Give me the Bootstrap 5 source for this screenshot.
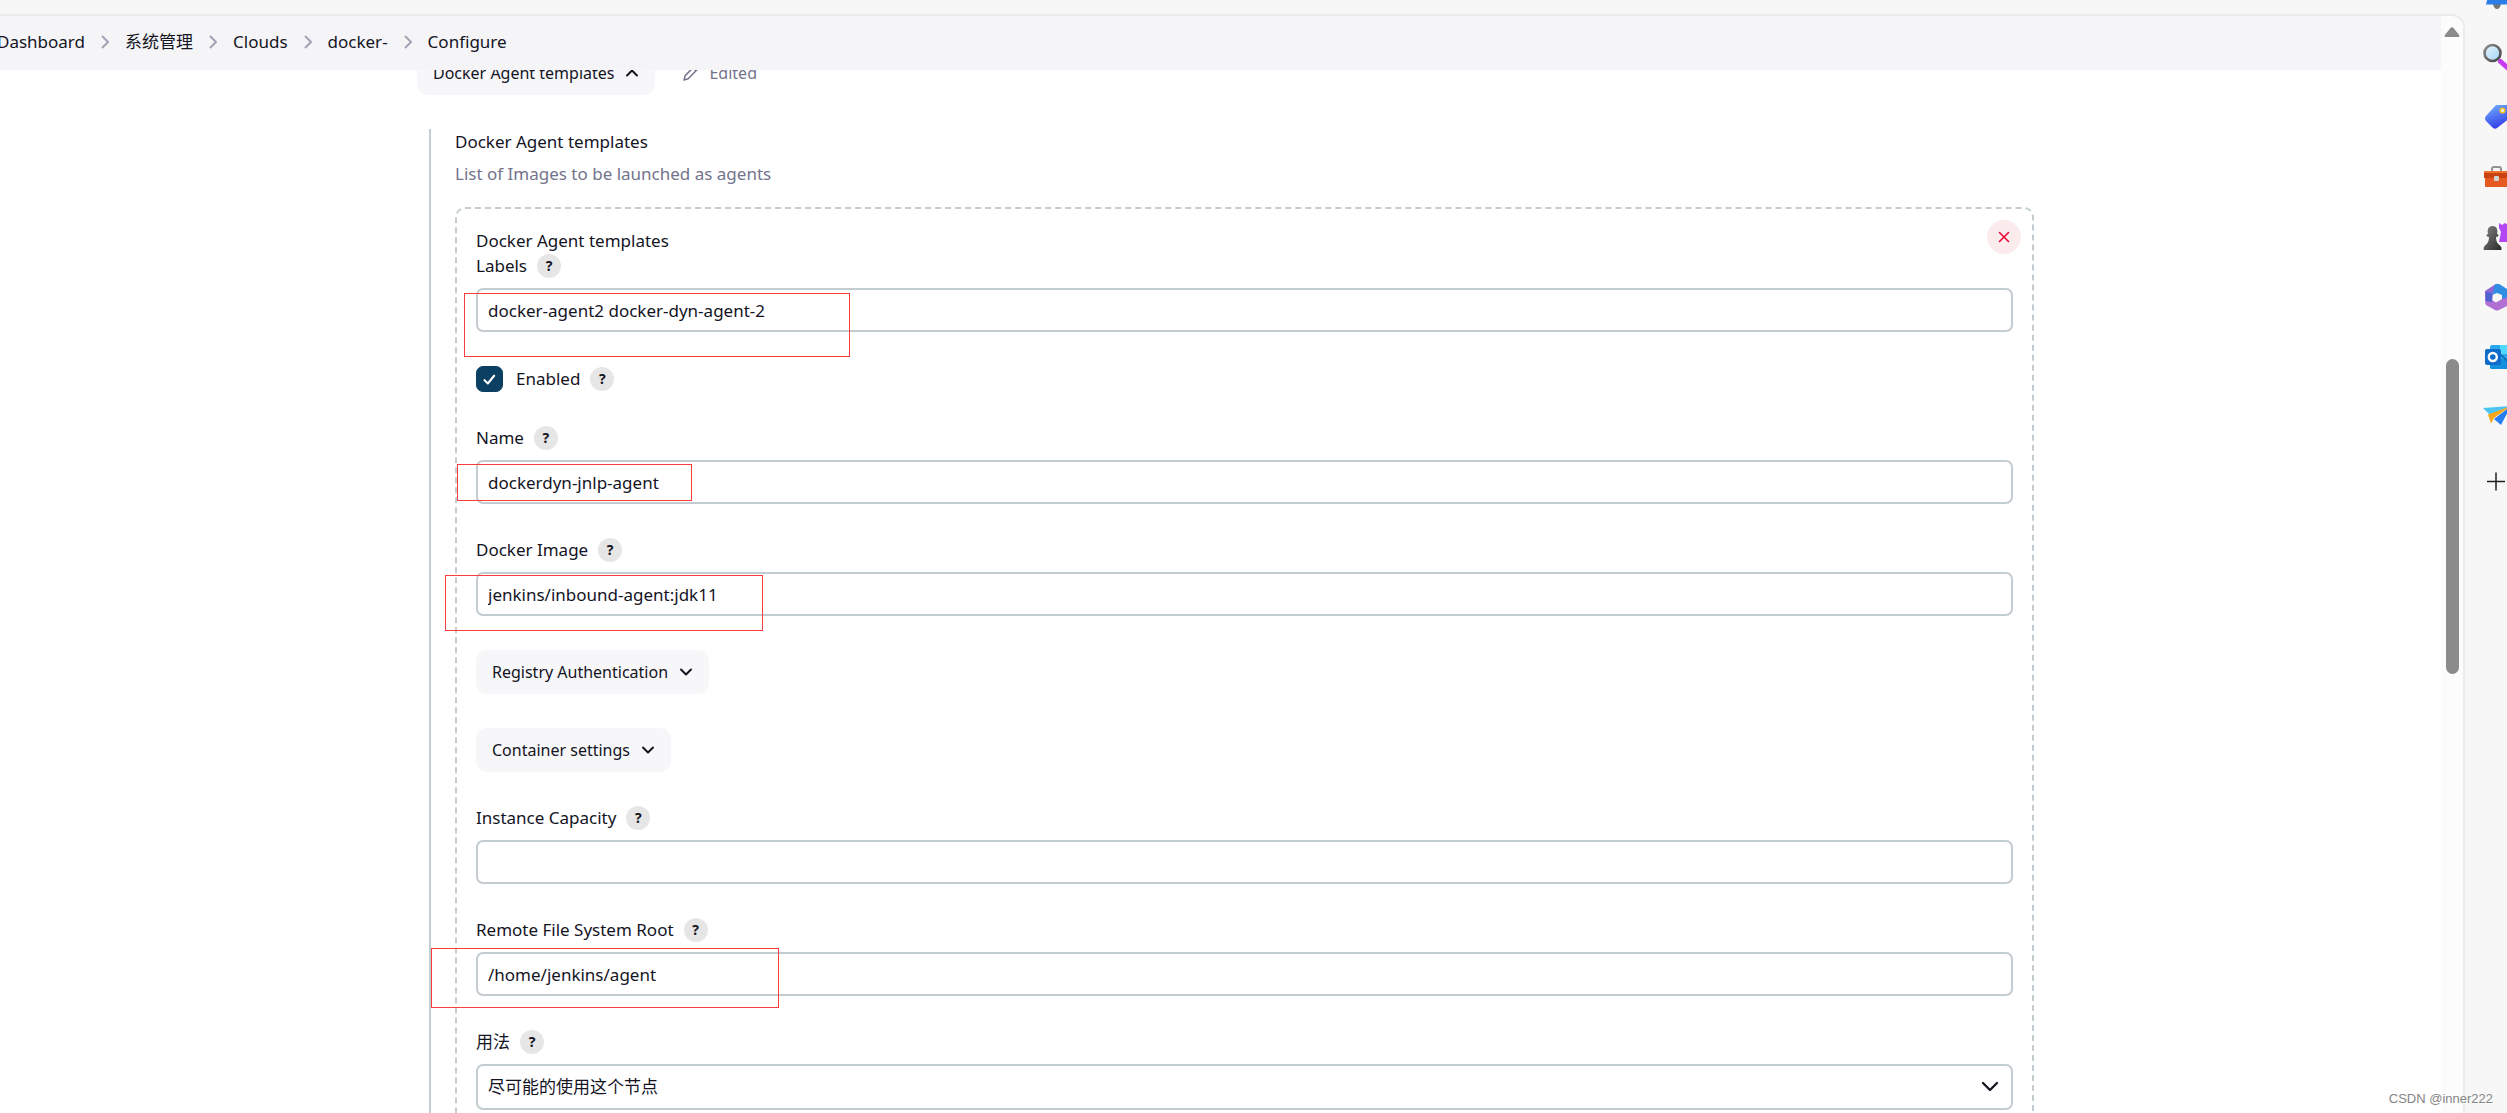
<!DOCTYPE html>
<html lang="zh-CN">
<head>
<meta charset="utf-8">
<meta name="viewport" content="width=device-width, initial-scale=1">
<title>Configure cloud</title>
<link href="https://cdn.jsdelivr.net/npm/bootstrap@5.3.0/dist/css/bootstrap.min.css" rel="stylesheet">
<style>
  :root { --ink: #14141f; --muted: #73738c; --line: #c3ccd1; --chrome: #f7f7f7; --soft: #f7f7fa; --mark-red: #fa3c3c; }
  body { font-family: "Noto Sans", "Noto Sans CJK SC", sans-serif; font-size: 17px; line-height: 26px; color: var(--ink); background: var(--chrome); }
  .browser { height: 100vh; padding-top: 14px; }
  .viewport-frame { border-top: 2px solid #ebebeb; border-right: 2px solid #ebebeb; border-top-right-radius: 14px; background: #fff; }
  .crumbs { height: 54px; margin-left: -3px; padding-bottom: 2px; gap: 16px; background: #f5f5f8; z-index: 2; }
  .crumbs a, .crumbs span { color: var(--ink); text-decoration: none; white-space: nowrap; }
  .form-page { padding: 0 407px 0 417px; margin-top: -19px; }
  .fold-btn { height: 44px; padding: 0 16px; border: 0; border-radius: 11px; background: var(--soft); color: var(--ink); font-size: 16px; gap: 11px; }
  .edited { color: var(--muted); font-size: 16px; gap: 10px; margin-left: 28px; }
  .section-body { margin: 34px 0 0 12px; padding-left: 24px; border-left: 2px solid var(--line); }
  .describe { color: var(--muted); margin: 6px 0 20px; }
  .chunk { border: 2px dashed var(--line); border-radius: 10px; padding: 19px; }
  .stack { gap: 34px; }
  .field-head { height: 24px; gap: 10px; margin-bottom: 10px; }
  .help { width: 24px; height: 24px; border: 0; border-radius: 50%; padding: 0; background: #e6e6e6; color: var(--ink); font-size: 14px; font-weight: 700; line-height: 24px; }
  .form-control, .form-select { height: 44px; border: 2px solid var(--line); border-radius: 7px; padding: 0 10px; font-size: 17px; color: var(--ink); background-color: #fff; }
  .form-select { height: 46px; background-size: 18px 18px; background-position: right 12px center;
    background-image: url("data:image/svg+xml,%3Csvg xmlns='http://www.w3.org/2000/svg' viewBox='0 0 18 18'%3E%3Cpath d='M2 5l7 7 7-7' fill='none' stroke='%2314141f' stroke-width='2.3' stroke-linecap='round' stroke-linejoin='round'/%3E%3C/svg%3E"); }
  .check-row { height: 26px; gap: 10px; }
  .check-row .form-check-input { width: 27px; height: 26px; margin: 0 3px 0 0; border-radius: 7px; }
  .form-check-input:checked { background-color: #0b4063; border-color: #0b4063; background-size: 21px 21px;
    background-image: url("data:image/svg+xml,%3Csvg xmlns='http://www.w3.org/2000/svg' viewBox='0 0 20 20'%3E%3Cpath d='M5.2 10.6l3.2 3.2 6-7.4' fill='none' stroke='%23fff' stroke-width='2' stroke-linecap='round' stroke-linejoin='round'/%3E%3C/svg%3E"); }
  .remove { top: 11px; right: 11px; width: 34px; height: 34px; border: 0; border-radius: 50%; background: #fcebed; }
  .outline { border: 1px solid var(--mark-red); pointer-events: none; z-index: 1; }
  .o-labels { left: -12px; top: 39px; width: 386px; height: 64px; }
  .o-name { left: -19px; top: 38px; width: 235px; height: 37px; }
  .o-image { left: -31px; top: 37px; width: 318px; height: 56px; }
  .o-root { left: -45px; top: 30px; width: 348px; height: 60px; }
  .track { width: 22px; background: #fcfcfc; border-top-right-radius: 12px; padding-top: 11px; }
  .thumb { width: 13px; height: 315px; margin-top: 322px; border-radius: 7px; background: #8b8b8b; }
  .dock { width: 42px; margin-top: -14px; }
  .dock a { position: relative; display: block; width: 28px; height: 28px; margin: 0 0 32px 18px; }
  .dock a:first-child { margin-top: -17px; }
  .dock svg { display: block; }
  .credit { right: 14px; bottom: 4px; font: 13px/20px "Liberation Sans", sans-serif; color: #858585; text-shadow: 1px 1px 0 #fff; z-index: 3; }
</style>
</head>
<body class="overflow-hidden">
<div class="browser d-flex overflow-hidden position-relative">
  <div class="viewport-frame d-flex flex-grow-1 overflow-hidden">
    <main class="flex-grow-1 overflow-hidden">
      <nav class="crumbs d-flex align-items-center position-relative" aria-label="breadcrumb">
        <a href="#">Dashboard</a>
        <svg width="8" height="14" viewBox="0 0 8 14" fill="none" stroke="#a3a3b5" stroke-width="2"><path d="M1 1l6 6-6 6"/></svg>
        <a href="#">系统管理</a>
        <svg width="8" height="14" viewBox="0 0 8 14" fill="none" stroke="#a3a3b5" stroke-width="2"><path d="M1 1l6 6-6 6"/></svg>
        <a href="#">Clouds</a>
        <svg width="8" height="14" viewBox="0 0 8 14" fill="none" stroke="#a3a3b5" stroke-width="2"><path d="M1 1l6 6-6 6"/></svg>
        <a href="#">docker-</a>
        <svg width="8" height="14" viewBox="0 0 8 14" fill="none" stroke="#a3a3b5" stroke-width="2"><path d="M1 1l6 6-6 6"/></svg>
        <span>Configure</span>
      </nav>

      <form class="form-page">
        <div class="d-flex align-items-center">
          <button type="button" class="fold-btn d-flex align-items-center">Docker Agent templates
            <svg width="14" height="14" viewBox="0 0 14 14" fill="none" stroke="#14141f" stroke-width="2" stroke-linecap="round" stroke-linejoin="round"><path d="M2 9.500l5-5 5 5"/></svg>
          </button>
          <div class="edited d-flex align-items-center">
            <svg width="16" height="16" viewBox="0 0 16 16" fill="none" stroke="#73738c" stroke-width="1.500" stroke-linejoin="round"><path d="M1 15l1.200-4.400L11.500 1.300q1.200-.9 2.500.2t.5 2.800L5.200 13.700zM10 3l3 3"/></svg>
            Edited
          </div>
        </div>

        <div class="section-body">
          <div>Docker Agent templates</div>
          <div class="describe">List of Images to be launched as agents</div>

          <div class="chunk position-relative">
            <button type="button" class="remove position-absolute d-flex align-items-center justify-content-center p-0" aria-label="Delete">
              <svg width="12" height="12" viewBox="0 0 12 12" stroke="#e6002e" stroke-width="1.500" stroke-linecap="round"><path d="M1.500 1.500l9 9M10.500 1.500l-9 9"/></svg>
            </button>
            <div>Docker Agent templates</div>
            <div class="stack d-flex flex-column">
              <div class="position-relative">
                <div class="field-head d-flex align-items-center"><label for="labels">Labels</label><button type="button" class="help">?</button></div>
                <input class="form-control" id="labels" type="text" value="docker-agent2 docker-dyn-agent-2">
                <div class="outline o-labels position-absolute"></div>
              </div>
              <div class="check-row d-flex align-items-center">
                <input class="form-check-input" id="enabled" type="checkbox" checked>
                <label for="enabled">Enabled</label><button type="button" class="help">?</button>
              </div>
              <div class="position-relative">
                <div class="field-head d-flex align-items-center"><label for="name">Name</label><button type="button" class="help">?</button></div>
                <input class="form-control" id="name" type="text" value="dockerdyn-jnlp-agent">
                <div class="outline o-name position-absolute"></div>
              </div>
              <div class="position-relative">
                <div class="field-head d-flex align-items-center"><label for="image">Docker Image</label><button type="button" class="help">?</button></div>
                <input class="form-control" id="image" type="text" value="jenkins/inbound-agent:jdk11">
                <div class="outline o-image position-absolute"></div>
              </div>
              <button type="button" class="fold-btn d-flex align-items-center align-self-start">Registry Authentication
                <svg width="14" height="14" viewBox="0 0 14 14" fill="none" stroke="#14141f" stroke-width="2" stroke-linecap="round" stroke-linejoin="round"><path d="M2 4.500l5 5 5-5"/></svg>
              </button>
              <button type="button" class="fold-btn d-flex align-items-center align-self-start">Container settings
                <svg width="14" height="14" viewBox="0 0 14 14" fill="none" stroke="#14141f" stroke-width="2" stroke-linecap="round" stroke-linejoin="round"><path d="M2 4.500l5 5 5-5"/></svg>
              </button>
              <div>
                <div class="field-head d-flex align-items-center"><label for="capacity">Instance Capacity</label><button type="button" class="help">?</button></div>
                <input class="form-control" id="capacity" type="text">
              </div>
              <div class="position-relative">
                <div class="field-head d-flex align-items-center"><label for="root">Remote File System Root</label><button type="button" class="help">?</button></div>
                <input class="form-control" id="root" type="text" value="/home/jenkins/agent">
                <div class="outline o-root position-absolute"></div>
              </div>
              <div>
                <div class="field-head d-flex align-items-center"><label for="usage">用法</label><button type="button" class="help">?</button></div>
                <select class="form-select" id="usage"><option>尽可能的使用这个节点</option></select>
              </div>
            </div>
          </div>
        </div>
      </form>
    </main>
    <div class="track d-flex flex-column align-items-center flex-shrink-0" aria-hidden="true">
      <svg width="16" height="10" viewBox="0 0 16 10" fill="#8b8b8b"><path d="M6.500 1q1.500-1.500 3 0l5.800 7.200q.5 1.800-1 1.800H1.700q-1.500 0-1-1.800z"/></svg>
      <div class="thumb"></div>
    </div>
  </div>

  <aside class="dock flex-shrink-0 overflow-hidden">
    <a href="#" aria-label="Notifications"><svg width="28" height="28" viewBox="0 0 28 28"><path d="M10 21h8q-1 5-4 5t-4-5z" fill="#777"/><path d="M7 6q7-8 14 0l9 15.500H3z" fill="#2b7de9"/></svg></a>
    <a href="#" aria-label="Search"><svg width="28" height="28" viewBox="0 0 28 28"><defs><linearGradient id="lens" x2="1" y2="1"><stop stop-color="#eaf7fe"/><stop offset="1" stop-color="#9fd2f3"/></linearGradient><linearGradient id="rim" x2="1" y2="1"><stop stop-color="#8a8a8a"/><stop offset="1" stop-color="#454545"/></linearGradient></defs><path d="M17.500 18.500l9 8" stroke="#c43bf0" stroke-width="5" stroke-linecap="round"/><circle cx="9.500" cy="10" r="8" fill="url(#lens)" stroke="url(#rim)" stroke-width="2.600"/></svg></a>
    <a href="#" aria-label="Shopping"><svg width="28" height="28" viewBox="0 0 28 28"><defs><linearGradient id="tag" x2=".4" y2="1"><stop stop-color="#72b4ff"/><stop offset="1" stop-color="#3540e8"/></linearGradient></defs><path d="M13 2h11q3 0 3 3v10L14 25q-2 1.500-4 0l-7-7q-2-2.500 0-5z" fill="url(#tag)"/><circle cx="19.500" cy="7.500" r="2.300" fill="#e9eeff" stroke="#f4c020" stroke-width="1.600"/></svg></a>
    <a href="#" aria-label="Tools"><svg width="28" height="28" viewBox="0 0 28 28"><path d="M9 9V6q0-2 2-2h5q2 0 2 2v3" fill="none" stroke="#929292" stroke-width="2"/><rect x="2" y="14" width="26" height="10" rx="1" fill="#e65a22"/><path d="M1 9q0-1 1-1h26v7H1z" fill="#c8430f"/><path d="M1 9q0-1 1-1h26v2H1z" fill="#f0722d"/><rect x="11" y="13" width="5" height="5" rx="1" fill="#d2d2d2"/></svg></a>
    <a href="#" aria-label="Games"><svg width="28" height="28" viewBox="0 0 28 28"><defs><linearGradient id="pawn" x2="1" y2="1"><stop stop-color="#858585"/><stop offset="1" stop-color="#292929"/></linearGradient></defs><path d="M16 0l3 2 3-2 3 2 3-2v19H16l2-10-2-4z" fill="#b248f5"/><path d="M5 11Q3.500 3 9.500 3T14 11q2.500.5 1 2.500l-2 .5q0 6 4 8.500 2 1.500 1.500 4.500H.7Q0 24 2 22.500 6 20 6 14l-2-.5Q2.500 11.500 5 11z" fill="url(#pawn)"/></svg></a>
    <a href="#" aria-label="Microsoft 365"><svg width="28" height="28" viewBox="0 0 28 28"><path d="M2 8L12 1.500l4 2.500-6 6-1 9-4 2-3-3z" fill="#9066d4"/><path d="M12 1.500Q14 0 17 1.500l11 7V17h-9v-5l-5-2-5 2 2-6z" fill="#2f8de4"/><path d="M2 19l7-2 4 2.500 7-4 8-1V21l-12 6q-2 1-4 0l-9-5z" fill="#b06fd2"/><path d="M9 10v9l-6-1V9z" fill="#4b62cf"/></svg></a>
    <a href="#" aria-label="Outlook"><svg width="28" height="28" viewBox="0 0 28 28"><rect x="7" y="2" width="21" height="24" rx="2" fill="#28a8ea"/><path d="M17 2h11v9H17z" fill="#50d9ff"/><path d="M7 16h21v10H9q-2 0-2-2z" fill="#1490df"/><path d="M18 12l10 9" stroke="#0b64ab" stroke-width="1.500"/><rect x="2" y="6" width="16" height="16" rx="2" fill="#0f6cc8"/><circle cx="9.800" cy="14" r="4" fill="none" stroke="#fff" stroke-width="2.400"/></svg></a>
    <a href="#" aria-label="Drop"><svg width="28" height="28" viewBox="0 0 28 28"><path d="M0 5l28-2-21 9z" fill="#4cc4f5"/><path d="M28 3L18 22l-7-6z" fill="#267ff0"/><path d="M5 11.500L28 3 11 15 8 20.500z" fill="#f5a81c"/></svg></a>
    <a href="#" aria-label="Add"><svg width="28" height="28" viewBox="0 0 28 28" stroke="#202020" stroke-width="1.500"><path d="M4 18.500h18M13 9.500v18"/></svg></a>
  </aside>
  <div class="credit position-absolute">CSDN @inner222</div>
</div>
<script src="https://cdn.jsdelivr.net/npm/bootstrap@5.3.0/dist/js/bootstrap.bundle.min.js"></script>
</body>
</html>
